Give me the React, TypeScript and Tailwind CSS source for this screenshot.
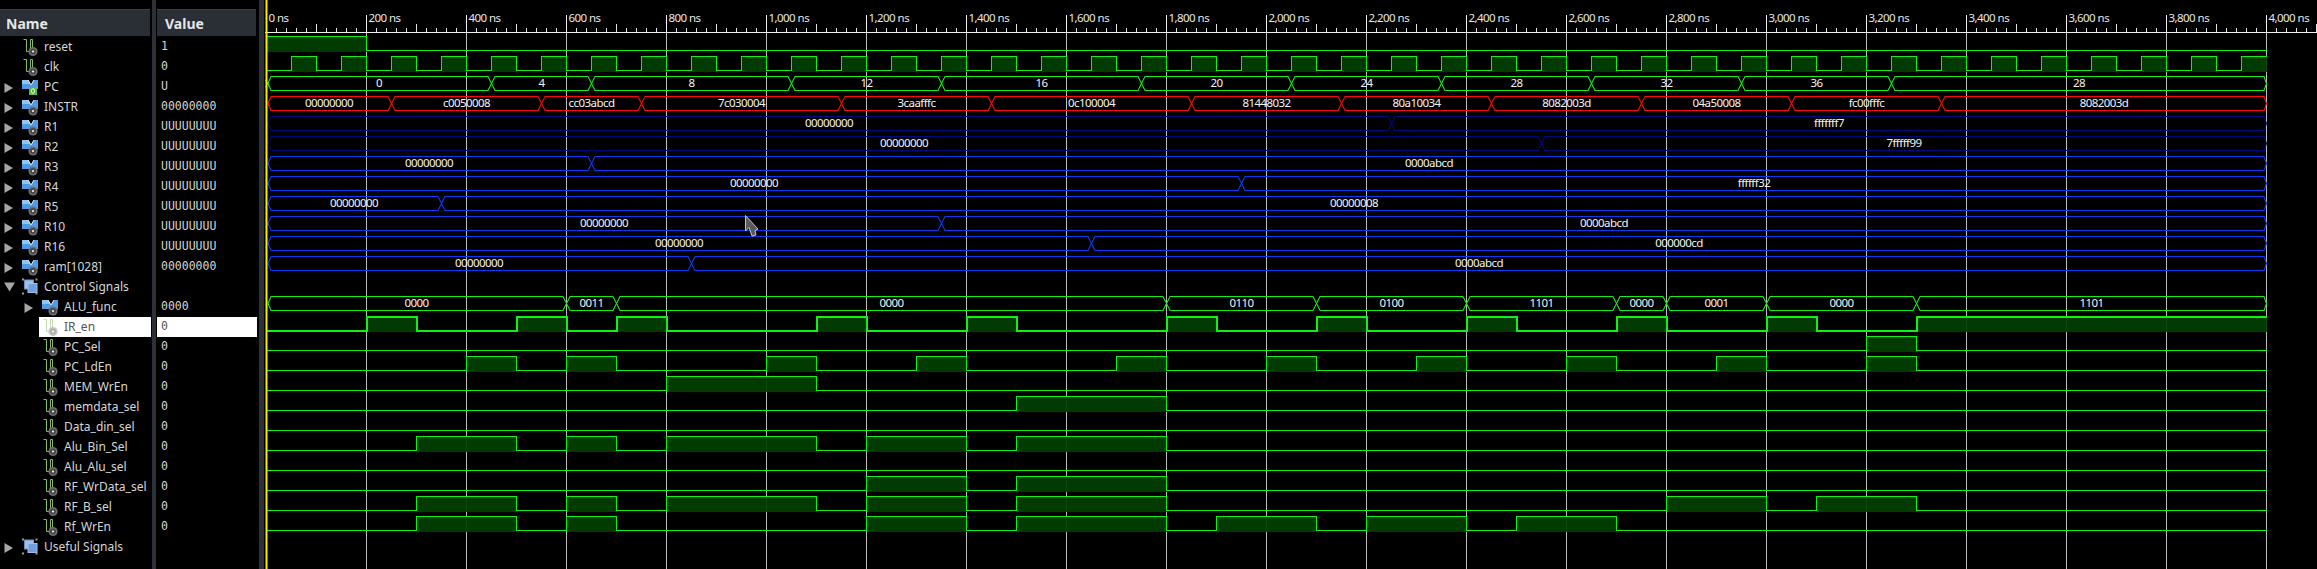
import React from "react";

type Kind = "signal" | "bus" | "pcbus" | "group";
type Row = { name: string; value?: string; kind: Kind; depth: number; open?: boolean; expand?: boolean };

const rows: Row[] = [
  { name: "reset", value: "1", kind: "signal", depth: 0 },
  { name: "clk", value: "0", kind: "signal", depth: 0 },
  { name: "PC", value: "U", kind: "pcbus", depth: 0, expand: true },
  { name: "INSTR", value: "00000000", kind: "bus", depth: 0, expand: true },
  { name: "R1", value: "UUUUUUUU", kind: "bus", depth: 0, expand: true },
  { name: "R2", value: "UUUUUUUU", kind: "bus", depth: 0, expand: true },
  { name: "R3", value: "UUUUUUUU", kind: "bus", depth: 0, expand: true },
  { name: "R4", value: "UUUUUUUU", kind: "bus", depth: 0, expand: true },
  { name: "R5", value: "UUUUUUUU", kind: "bus", depth: 0, expand: true },
  { name: "R10", value: "UUUUUUUU", kind: "bus", depth: 0, expand: true },
  { name: "R16", value: "UUUUUUUU", kind: "bus", depth: 0, expand: true },
  { name: "ram[1028]", value: "00000000", kind: "bus", depth: 0, expand: true },
  { name: "Control Signals", kind: "group", depth: 0, expand: true, open: true },
  { name: "ALU_func", value: "0000", kind: "bus", depth: 1, expand: true },
  { name: "IR_en", value: "0", kind: "signal", depth: 1 },
  { name: "PC_Sel", value: "0", kind: "signal", depth: 1 },
  { name: "PC_LdEn", value: "0", kind: "signal", depth: 1 },
  { name: "MEM_WrEn", value: "0", kind: "signal", depth: 1 },
  { name: "memdata_sel", value: "0", kind: "signal", depth: 1 },
  { name: "Data_din_sel", value: "0", kind: "signal", depth: 1 },
  { name: "Alu_Bin_Sel", value: "0", kind: "signal", depth: 1 },
  { name: "Alu_Alu_sel", value: "0", kind: "signal", depth: 1 },
  { name: "RF_WrData_sel", value: "0", kind: "signal", depth: 1 },
  { name: "RF_B_sel", value: "0", kind: "signal", depth: 1 },
  { name: "Rf_WrEn", value: "0", kind: "signal", depth: 1 },
  { name: "Useful Signals", kind: "group", depth: 0, expand: true },
];

const GREEN = "#12f012";
const FILL = "#024002";
const BLUE = "#0a3cf5";
const NAVY = "#000a80";
const RED = "#fa0a0a";

const X = (t: number) => t * 0.5 + 1.5;
const top = (r: number) => 36.5 + r * 20;
const low = (r: number) => 50.5 + r * 20;

type Seg = [number, string];
// each bus: row, colour, transitions [start time, label], does it cross at time 0
const buses: { row: number; color: string; segs: Seg[]; cross?: boolean }[] = [
  { row: 2, color: GREEN, cross: true, segs: [[0, "0"], [450, "4"], [650, "8"], [1050, "12"], [1350, "16"], [1750, "20"], [2050, "24"], [2350, "28"], [2650, "32"], [2950, "36"], [3250, "28"]] },
  { row: 3, color: RED, segs: [[0, "00000000"], [250, "c0050008"], [550, "cc03abcd"], [750, "7c030004"], [1150, "3caafffc"], [1450, "0c100004"], [1850, "81448032"], [2150, "80a10034"], [2450, "8082003d"], [2750, "04a50008"], [3050, "fc00fffc"], [3350, "8082003d"]] },
  { row: 4, color: NAVY, segs: [[0, "00000000"], [2250, "fffffff7"]] },
  { row: 5, color: NAVY, segs: [[0, "00000000"], [2550, "7fffff99"]] },
  { row: 6, color: BLUE, cross: true, segs: [[0, "00000000"], [650, "0000abcd"]] },
  { row: 7, color: BLUE, cross: true, segs: [[0, "00000000"], [1950, "ffffff32"]] },
  { row: 8, color: BLUE, cross: true, segs: [[0, "00000000"], [350, "00000008"]] },
  { row: 9, color: BLUE, cross: true, segs: [[0, "00000000"], [1350, "0000abcd"]] },
  { row: 10, color: BLUE, cross: true, segs: [[0, "00000000"], [1650, "000000cd"]] },
  { row: 11, color: BLUE, segs: [[0, "00000000"], [850, "0000abcd"]] },
  { row: 13, color: GREEN, segs: [[0, "0000"], [600, "0011"], [700, "0000"], [1800, "0110"], [2100, "0100"], [2400, "1101"], [2700, "0000"], [2800, "0001"], [3000, "0000"], [3300, "1101"]] },
];

const clk: [number, number][] = [];
for (let t = 50; t < 4000; t += 100) clk.push([t, t + 50]);

const bits: { row: number; thick?: boolean; high: [number, number][] }[] = [
  { row: 0, high: [[0, 200]] },
  { row: 1, high: clk },
  { row: 14, thick: true, high: [[200, 300], [500, 600], [700, 800], [1100, 1200], [1400, 1500], [1800, 1900], [2100, 2200], [2400, 2500], [2700, 2800], [3000, 3100], [3300, 4000]] },
  { row: 15, high: [[3200, 3300]] },
  { row: 16, high: [[400, 500], [600, 700], [1000, 1100], [1300, 1400], [1700, 1800], [2000, 2100], [2300, 2400], [2600, 2700], [2900, 3000], [3200, 3300]] },
  { row: 17, high: [[800, 1100]] },
  { row: 18, high: [[1500, 1800]] },
  { row: 19, high: [] },
  { row: 20, high: [[300, 500], [600, 700], [800, 1100], [1200, 1400], [1500, 1800]] },
  { row: 21, high: [] },
  { row: 22, high: [[1200, 1400], [1500, 1800]] },
  { row: 23, high: [[300, 500], [600, 700], [800, 1100], [1200, 1400], [1500, 1800], [2800, 3000], [3100, 3300]] },
  { row: 24, high: [[300, 500], [600, 700], [1200, 1400], [1500, 1800], [1900, 2100], [2200, 2400], [2500, 2700]] },
];

const bitPath = (row: number, high: [number, number][]) => {
  let d = `M${X(0)} ${high[0]?.[0] === 0 ? top(row) : low(row)}`;
  for (const [a, b] of high) {
    d += ` H${X(a)} V${top(row)} H${X(b)}`;
    if (b < 4000) d += ` V${low(row)}`;
  }
  if (high.length === 0 || high[high.length - 1][1] < 4000) d += ` H${X(4000)}`;
  return d;
};

const Gear = ({ x, y, light }: { x: number; y: number; light?: boolean }) => (
  <g>
    <circle cx={x} cy={y} r="4.6" fill={light ? "#c4c4c4" : "#6e6e6e"} />
    <circle cx={x} cy={y} r="3" fill={light ? "#b0b0b0" : "#4a4a4a"} />
    <circle cx={x} cy={y} r="1.1" fill="#f2f2f2" />
  </g>
);

const Icon = ({ kind, light }: { kind: Kind; light?: boolean }) => {
  if (kind === "signal")
    return (
      <svg width="16" height="20" viewBox="0 0 16 20" className="shrink-0">
        <path d="M1.5 2.5 H4.5 V14.5 H8.5 V2.5 H10.5 V11" fill="none" stroke={light ? "#c5dbb5" : "#86b86a"} strokeWidth="1" />
        <Gear x={11} y={14.5} light={light} />
      </svg>
    );
  if (kind === "group")
    return (
      <svg width="16" height="20" viewBox="0 0 16 20" className="shrink-0">
        <rect x="2.5" y="3" width="9" height="9" fill="#9fc0ea" stroke="#6c8fc0" />
        <rect x="6" y="6.5" width="9" height="9" fill="#6f9fe0" stroke="#9fc0ea" />
        <rect x="0" y="1.5" width="2" height="2" fill="#9a9a9a" />
        <rect x="13.5" y="1.5" width="2" height="2" fill="#9a9a9a" />
        <rect x="0" y="15.5" width="2" height="2" fill="#9a9a9a" />
        <rect x="13.5" y="15.5" width="2" height="2" fill="#9a9a9a" />
      </svg>
    );
  return (
    <svg width="16" height="20" viewBox="0 0 16 20" className="shrink-0">
      <path d="M0 3 H6 L9 8 L12 3 H16 V12 H0 Z" fill="#4f9be6" />
      <path d="M0 3 H6 L8 7 H0 Z" fill="#8fc6f5" />
      <path d="M6 3 L9 8 L12 3" fill="none" stroke="#e8f2fb" strokeWidth="1" />
      {kind === "pcbus" ? (
        <g>
          <rect x="7" y="10" width="8" height="8" fill="#5fb84a" />
          <ellipse cx="11" cy="14" rx="1.6" ry="2.4" fill="none" stroke="#e8ffe0" strokeWidth="0.9" />
        </g>
      ) : (
        <Gear x={11} y={14} />
      )}
    </svg>
  );
};

const Arrow = ({ open }: { open?: boolean }) =>
  open ? (
    <svg width="12" height="12" viewBox="0 0 12 12" className="shrink-0">
      <path d="M0 1.5 H11 L5.5 10.5 Z" fill="#a6a6a6" />
    </svg>
  ) : (
    <svg width="10" height="12" viewBox="0 0 10 12" className="shrink-0 mt-[2px]">
      <path d="M0.5 1 L9 6 L0.5 11 Z" fill="#a6a6a6" />
    </svg>
  );

const NameRow = ({ row }: { row: Row }) => {
  const selected = row.name === "IR_en";
  let box = "pl-[4px]";
  if (row.depth === 1) box = row.expand ? "pl-[24px]" : "ml-[39px] pl-[3px]";
  return (
    <div className={`flex items-center h-5 ${box} ${selected ? "bg-white text-[#555555]" : "text-[#d6d6d6]"}`}>
      {row.expand ? (
        <span className="w-[18px] flex shrink-0">
          <Arrow open={row.open} />
        </span>
      ) : row.depth === 0 ? (
        <span className="w-[18px] shrink-0" />
      ) : null}
      <Icon kind={row.kind} light={selected} />
      <span className="ml-[6px] whitespace-nowrap">{row.name}</span>
    </div>
  );
};

const Splitter = ({ className }: { className: string }) => (
  <div className={`shrink-0 bg-[#2c3137] border-black ${className}`} />
);

const Header = ({ label, className }: { label: string; className: string }) => (
  <div className={`mt-[9px] h-[27px] mb-px flex items-center bg-[#2a2f35] border-t border-[#3b4148] text-[14px] font-bold text-[#e6e6e6] ${className}`}>
    {label}
  </div>
);

const Waves = () => {
  const ticks: React.ReactNode[] = [];
  for (let t = 0; t <= 4100; t += 20) {
    if (t % 200 === 0) continue;
    const h = t % 100 === 0 ? 24 : 28;
    ticks.push(<line key={t} x1={X(t)} x2={X(t)} y1={h} y2={32} stroke="#e0e0e0" />);
  }
  const grid: number[] = [];
  for (let t = 0; t <= 4000; t += 200) grid.push(t);

  return (
    <svg width="2052" height="569" viewBox="0 0 2052 569" className="shrink-0 font-['Noto_Sans',sans-serif] text-[11.5px] tracking-[-0.55px]">
      <g shapeRendering="crispEdges">
        {ticks}
        <line x1="0" x2="2052" y1="32.5" y2="32.5" stroke="#f0f0f0" />
        {grid.map((t) => (
          <g key={t}>
            <line x1={X(t)} x2={X(t)} y1="15" y2="33" stroke="#f0f0f0" />
            <line x1={X(t)} x2={X(t)} y1="33" y2="569" stroke="#bcbcbc" />
          </g>
        ))}
      </g>
      {grid.map((t) => (
        <text key={t} x={X(t) + 2} y="22" fill="#e8e8e8">
          {t.toLocaleString("en-US")} ns
        </text>
      ))}

      {bits.map((b) => (
        <g key={b.row} shapeRendering="crispEdges">
          {b.high.map(([a, c]) => (
            <rect key={a} x={X(a)} y={top(b.row)} width={(c - a) * 0.5} height="15" fill={FILL} fillOpacity="0.93" />
          ))}
          <path d={bitPath(b.row, b.high)} fill="none" stroke={GREEN} strokeWidth={b.thick ? 2 : 1} />
        </g>
      ))}

      {buses.map((b) => (
        <g key={b.row}>
          {b.cross && (
            <path d={`M0 ${top(b.row) + 3} L3 ${top(b.row) + 7} L0 ${low(b.row) - 3}`} fill="none" stroke={b.color} />
          )}
          {b.segs.map(([t, label], i) => {
            const end = i + 1 < b.segs.length ? b.segs[i + 1][0] : 4000;
            const xa = t === 0 ? X(0) + 1.5 : X(t);
            const xb = X(end);
            const da = t === 0 ? 3 : 3.5;
            const db = end === 4000 ? 2.5 : 3.5;
            const mid = top(b.row) + 7;
            return (
              <g key={t}>
                <path
                  d={`M${xa} ${mid} L${xa + da} ${top(b.row)} H${xb - db} L${xb} ${mid} L${xb - db} ${low(b.row)} H${xa + da} Z`}
                  fill="none"
                  stroke={b.color}
                  strokeWidth="1.1"
                />
                <text x={(X(t) + X(end)) / 2} y={mid + 3} textAnchor="middle" fill="#f4f4f4">
                  {label}
                </text>
              </g>
            );
          })}
        </g>
      ))}

      <rect x="0.5" y="0" width="2" height="569" fill="#f5f000" />
      {/* mouse pointer left over the wave view */}
      <path d="M480.5 215.5 L493 229 L490 230.5 L491 235 L487 236 L484 227.5 L480.5 231 Z" fill="#5a5a5a" stroke="#e8e8e8" strokeWidth="0.8" />
    </svg>
  );
};

export default function App() {
  return (
    <div className="flex w-[2317px] h-[569px] overflow-hidden bg-black font-['Noto_Sans',sans-serif] text-[12px]">
      <div className="w-[151px] shrink-0">
        <Header label="Name" className="pl-[6px] mr-px" />
        {rows.map((r) => (
          <NameRow key={r.name} row={r} />
        ))}
      </div>
      <Splitter className="w-[6px] border-l border-r" />
      <div className="w-[100px] shrink-0 font-['DejaVu_Sans_Mono',monospace] text-[11.5px] text-[#d6d6d6]">
        <Header label="Value" className="pl-[8px] mr-px font-['Noto_Sans',sans-serif]" />
        {rows.map((r) => (
          <div key={r.name} className={`h-5 pl-[4px] flex items-center ${r.name === "IR_en" ? "bg-white text-[#555555]" : ""}`}>
            {r.value}
          </div>
        ))}
      </div>
      <Splitter className="w-[8px] border-l-2 border-r" />
      <Waves />
    </div>
  );
}
